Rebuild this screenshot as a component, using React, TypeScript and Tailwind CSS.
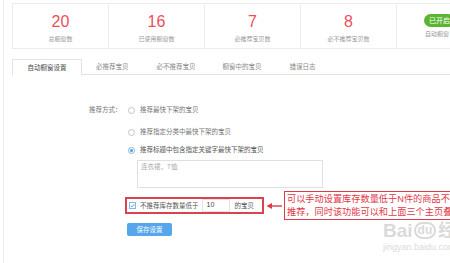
import React from 'react';

const stats = [
  { value: '20', label: '总橱窗数' },
  { value: '16', label: '已使用橱窗数' },
  { value: '7', label: '必推荐宝贝数' },
  { value: '8', label: '必不推荐宝贝数' },
];

const tabs = ['自动橱窗设置', '必推荐宝贝', '必不推荐宝贝', '橱窗中的宝贝', '错误日志'];

function Radio({ checked = false }: { checked?: boolean }) {
  return (
    <span
      className={`flex w-[7px] h-[7px] shrink-0 items-center justify-center rounded-full border ${
        checked ? 'border-[#7db8ea]' : 'border-[#c4c4c4]'
      }`}
    >
      {checked && <span className="w-[3px] h-[3px] rounded-full bg-[#4a9de0]" />}
    </span>
  );
}

export default function App() {
  return (
    <div className="relative w-[450px] h-[263px] overflow-hidden bg-white font-['Liberation_Sans','Noto_Sans_CJK_SC',sans-serif]">
      <div className="ml-[3px] h-full border-l border-[#ededed] pl-[8px]">
        {/* Stats */}
        <div className="flex pt-[3px]">
          {stats.map((s) => (
            <div
              key={s.label}
              className="-mr-px flex w-[97px] h-[46px] shrink-0 flex-col items-center border border-[#ececec]"
            >
              <div className="mt-[9px] text-[16px] leading-[18px] text-[#ee4d5a]">{s.value}</div>
              <div className="mt-[5px] text-[6px] leading-[7px] text-[#9a9a9a]">{s.label}</div>
            </div>
          ))}
          <div className="flex w-[97px] h-[46px] shrink-0 flex-col items-start border border-[#ececec] pl-[27px]">
            <div className="mt-[10px] rounded-full bg-[#5cb531] px-[5px] text-[7px] leading-[13px] text-white whitespace-nowrap">
              已开启
            </div>
            <div className="mt-[4px] ml-px text-[6px] leading-[7px] text-[#9a9a9a] whitespace-nowrap">自动橱窗</div>
          </div>
        </div>

        {/* Tabs */}
        <div className="mt-[10px] flex h-[16px] border-b border-[#e3e3e3]">
          {tabs.map((t, i) =>
            i === 0 ? (
              <div
                key={t}
                className="-mb-px flex w-[70px] h-[17px] items-center justify-center border border-[#e3e3e3] border-b-white bg-white text-[6.5px] text-[#444]"
              >
                {t}
              </div>
            ) : (
              <div
                key={t}
                className={`flex h-[16px] items-center text-[6.5px] text-[#888] ${
                  i === 1 ? 'ml-[14px]' : i === 2 ? 'ml-[28px]' : i === 3 ? 'ml-[27px]' : 'ml-[28px]'
                }`}
              >
                {t}
              </div>
            )
          )}
        </div>

        {/* Form */}
        <div className="mt-[30px] flex text-[6.5px] leading-[10px]">
          <div className="ml-[77px] w-[39px] shrink-0 text-[#777]">推荐方式：</div>
          <div className="flex flex-col">
            <div className="flex items-center gap-[5px] text-[#777]">
              <Radio />
              <span>推荐最快下架的宝贝</span>
            </div>
            <div className="mt-[12px] flex items-center gap-[5px] text-[#777]">
              <Radio />
              <span>推荐指定分类中最快下架的宝贝</span>
            </div>
            <div className="mt-[8px] flex items-center gap-[5px] text-[#555]">
              <Radio checked />
              <span>推荐标题中包含指定关键字最快下架的宝贝</span>
            </div>
            <div className="mt-[5px] ml-[9px] w-[186px] h-[28px] border border-[#e0e0e0] px-[3px] pt-[1px] text-[#aaa]">
              连衣裙，T恤
            </div>
          </div>
        </div>

        {/* Stock filter + annotation */}
        <div className="mt-[3px] flex items-center">
          <div className="ml-[113px] flex w-[139px] h-[17px] shrink-0 items-center border-2 border-[#d9434f] pl-[2px] text-[6.5px] text-[#555]">
            <span className="flex w-[7px] h-[7px] items-center justify-center border border-[#7db8ea]">
              <svg width="5" height="5" viewBox="0 0 10 10">
                <path d="M1.5 5.2 L4 7.6 L8.6 2.4" fill="none" stroke="#3f8fd6" strokeWidth="1.8" />
              </svg>
            </span>
            <span className="ml-[4px]">不推荐库存数量低于</span>
            <span className="ml-[3px] flex w-[28px] h-[13px] items-center border border-[#e3e3e3] pl-[4px] text-[7px] text-[#444]">
              10
            </span>
            <span className="ml-[5px]">的宝贝</span>
          </div>
          <svg width="17" height="8" viewBox="0 0 17 8" className="ml-[2px] shrink-0">
            <path d="M16 4 H5" stroke="#e0394a" strokeWidth="1.4" />
            <path d="M0.5 4 L6 1 L6 7 Z" fill="#e0394a" />
          </svg>
          <div className="ml-px w-[180px] h-[29px] shrink-0 border border-[#e0394a] bg-white pl-[2px] text-[9.2px] leading-[13px] text-[#e0394a] whitespace-nowrap overflow-hidden">
            <div className="mt-px">可以手动设置库存数量低于N件的商品不做</div>
            <div>推荐，同时该功能可以和上面三个主页叠加</div>
          </div>
        </div>

        {/* Save */}
        <div className="mt-[3px] ml-[115px] flex w-[45px] h-[13px] items-center justify-center rounded-[2px] bg-[#55a6ea] text-[6.5px] text-white">
          保存设置
        </div>
      </div>

      {/* Watermark */}
      <div className="pointer-events-none absolute left-[383px] top-[221px] flex w-max flex-col whitespace-nowrap text-[#dadada]">
        <div className="flex items-center text-[19px] font-bold leading-[19px]">
          <span>Bai</span>
          <span className="ml-px rounded-full border-2 border-[#dadada] px-[2px] text-[12px] leading-[13px]">du</span>
          <span className="ml-[2px] text-[17px]">经验</span>
        </div>
        <div className="mt-[2px] text-[9px] leading-[10px]">jingyan.baidu.com</div>
      </div>
    </div>
  );
}
